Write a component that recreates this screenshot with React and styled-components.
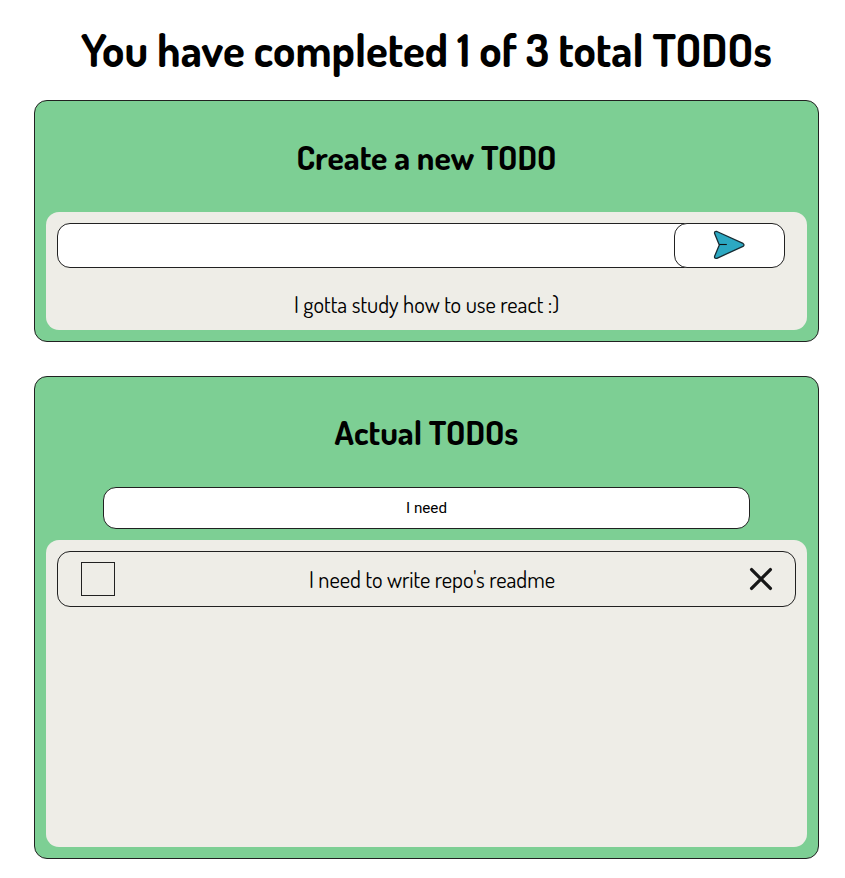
import React, { useState } from "react";
import styled, { createGlobalStyle } from "styled-components";

const GlobalStyle = createGlobalStyle`
  * { box-sizing: border-box; }
  body {
    margin: 0;
    background: #fff;
    color: #000;
    font-family: Dosis, Lato, "Open Sans", sans-serif;
    font-size: 22.5px;
    overflow: hidden;
  }
`;

const Page = styled.main`
  width: 785px;
  margin: 0 0 0 34px;
  display: flex;
  flex-direction: column;
`;

const Title = styled.h1`
  height: 100px;
  margin: 0;
  display: flex;
  align-items: center;
  justify-content: center;
  font-size: 45px;
  line-height: 56px;
  font-weight: 700;
  white-space: nowrap;
`;

const Card = styled.section`
  height: ${(p) => p.$height}px;
  margin-bottom: 34px;
  padding: 11px;
  display: flex;
  flex-direction: column;
  align-items: center;
  background: #7dcf94;
  border: 1px solid #212121;
  border-radius: 13px;
`;

const CardTitle = styled.h2`
  height: ${(p) => p.$height}px;
  margin: 0;
  padding-bottom: ${(p) => p.$lift}px;
  flex: none;
  display: flex;
  align-items: center;
  font-size: 33.75px;
  line-height: 42px;
  font-weight: 700;
`;

const Panel = styled.div`
  flex: 1;
  width: 100%;
  padding: 11px;
  background: #eeede7;
  border-radius: 13px;
`;

const Form = styled.form`
  display: flex;
  height: 45px;
`;

const NewTodoInput = styled.input`
  width: 640px;
  padding: 0 12px;
  font: inherit;
  background: #fff;
  border: 1px solid #212121;
  border-radius: 13px;
  outline: none;
`;

const SubmitButton = styled.button`
  width: 111px;
  margin-left: -23px;
  padding: 0 1px 2px 0;
  display: flex;
  align-items: center;
  justify-content: center;
  background: #fff;
  border: 1px solid #212121;
  border-radius: 13px;
`;

const Hint = styled.p`
  margin: 22px 0 0;
  text-align: center;
  line-height: 28px;
`;

const SearchInput = styled.input`
  width: 647px;
  height: 42px;
  flex: none;
  margin-bottom: 11px;
  padding: 0;
  text-align: center;
  font-family: Roboto, "Liberation Sans", Arial, sans-serif;
  font-size: 15.2px;
  color: #000;
  background: #fff;
  border: 1px solid #212121;
  border-radius: 13px;
  outline: none;
`;

const TodoItem = styled.div`
  height: 56px;
  padding: 0 22px 0 23px;
  display: flex;
  align-items: center;
  justify-content: space-between;
  border: 1px solid #212121;
  border-radius: 13px;
`;

const Checkbox = styled.button`
  width: 34px;
  height: 34px;
  padding: 0;
  background: transparent;
  border: 1px solid #212121;
`;

const DeleteButton = styled.button`
  width: 24px;
  height: 24px;
  padding: 0;
  display: flex;
  background: transparent;
  border: 0;
`;

const SendIcon = () => (
  <svg width="34" height="32" viewBox="0 0 34 32">
    <path
      d="M4.9 2.5 31 14.4Q33 15.9 31 17.4L4.9 29.3Q2.1 29.9 2.6 27.3L7.3 16 2.6 4.5Q2.1 1.9 4.9 2.5Z"
      fill="#2ca8c2"
      stroke="#172b32"
      strokeWidth="1.3"
      strokeLinejoin="round"
    />
    <path d="M7.3 15.5H14.8" stroke="#111" strokeWidth="1.1" />
  </svg>
);

const CrossIcon = () => (
  <svg width="24" height="24" viewBox="0 0 24 24" fill="none" stroke="#171717" strokeWidth="3.3" strokeLinecap="round">
    <path d="M2.6 2.6 21.4 21.4M21.4 2.6 2.6 21.4" />
  </svg>
);

export default function App() {
  const [draft, setDraft] = useState("");
  const [query, setQuery] = useState("I need");
  return (
    <>
      <GlobalStyle />
      <Page>
        <Title>You have completed 1 of 3 total TODOs</Title>
        <Card $height={242}>
          <CardTitle $height={100} $lift={11}>Create a new TODO</CardTitle>
          <Panel>
            <Form onSubmit={(e) => e.preventDefault()}>
              <NewTodoInput value={draft} onChange={(e) => setDraft(e.target.value)} />
              <SubmitButton aria-label="Add"><SendIcon /></SubmitButton>
            </Form>
            <Hint>I gotta study how to use react :)</Hint>
          </Panel>
        </Card>
        <Card $height={483}>
          <CardTitle $height={99} $lift={12}>Actual TODOs</CardTitle>
          <SearchInput value={query} onChange={(e) => setQuery(e.target.value)} />
          <Panel>
            <TodoItem>
              <Checkbox aria-label="Complete" />
              <span>I need to write repo's readme</span>
              <DeleteButton aria-label="Delete"><CrossIcon /></DeleteButton>
            </TodoItem>
          </Panel>
        </Card>
      </Page>
    </>
  );
}
